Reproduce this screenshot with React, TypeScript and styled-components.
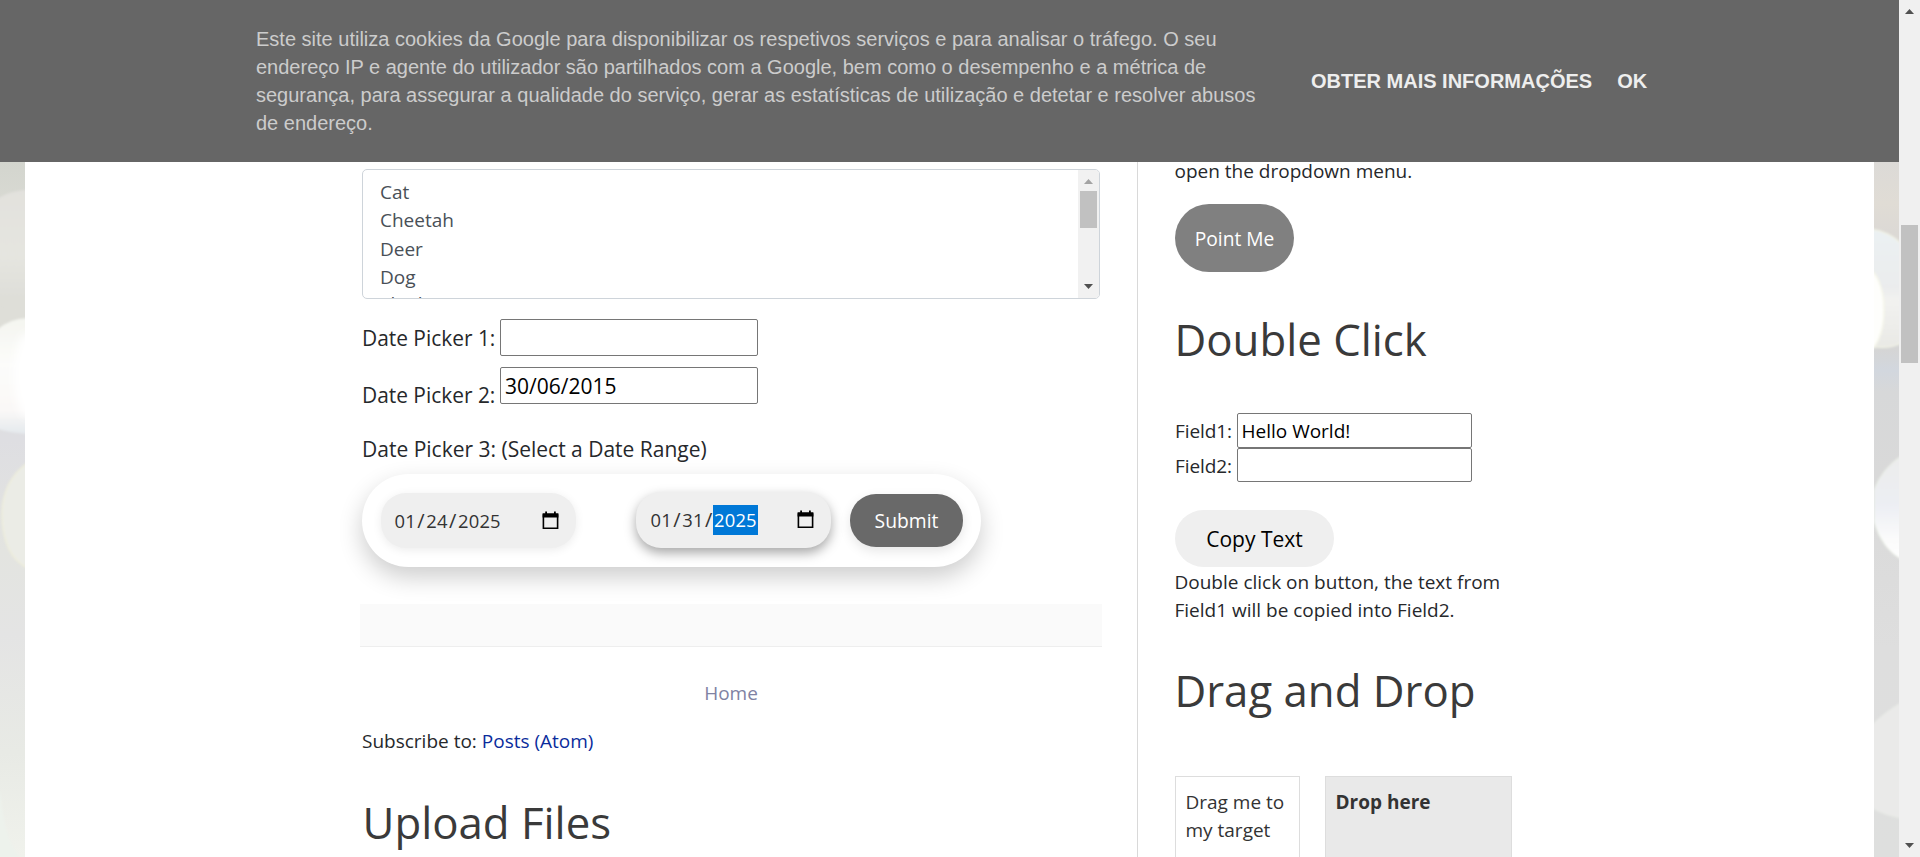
import React from "react";
import styled, { createGlobalStyle } from "styled-components";

const GlobalStyle = createGlobalStyle`
  *, *::before, *::after { box-sizing: border-box; }
  body {
    margin: 0;
    overflow: hidden;
    background: #fff;
    color: #26282b;
    font-family: "Open Sans", "Noto Sans", sans-serif;
    font-size: 19px;
    line-height: 28px;
  }
`;

const Page = styled.div`
  position: relative;
  display: flex;
  width: 1920px;
  height: 857px;
  overflow: hidden;
`;

/* cookie notice */

const CookieBar = styled.aside`
  position: absolute;
  top: 0;
  left: 0;
  z-index: 2;
  display: flex;
  align-items: center;
  width: 1899px;
  height: 162px;
  padding-left: 256px;
  background: #666;
  font-family: "Liberation Sans", Arial, sans-serif;
  font-size: 20px;
  line-height: 28px;
`;

const CookieText = styled.p`
  width: 1010px;
  margin: 0 45px 0 0;
  color: #ccc;
`;

const CookieActions = styled.div`
  display: flex;
  gap: 25px;
`;

const CookieAction = styled.a`
  color: #eee;
  font-weight: bold;
  white-space: nowrap;
`;

/* page frame */

const Strip = styled.svg`
  flex: none;
  width: 25px;
  height: 857px;
`;

const Content = styled.div`
  flex: none;
  display: flex;
  width: 1849px;
  height: 857px;
  padding-left: 337px;
  background: #fff;
`;

const MainColumn = styled.main`
  flex: none;
  width: 775px;
  height: 857px;
  padding: 169px 37px 0 0;
`;

const SideColumn = styled.aside`
  flex: none;
  width: 375px;
  height: 857px;
  padding: 157px 0 0 37px;
  border-left: 1px solid #d9d9d9;
`;

const Track = styled.div`
  flex: none;
  display: flex;
  flex-direction: column;
  align-items: center;
  width: 21px;
  height: 857px;
  background: #f0f0f0;
`;

const TrackThumb = styled.div`
  width: 17px;
  height: 138px;
  margin-top: 211px;
  background: #c1c1c1;
`;

const TrackArrow = styled.svg<{ $top: number }>`
  flex: none;
  width: 9px;
  height: 5px;
  margin-top: ${(p) => p.$top}px;
`;

/* shared */

const Heading = styled.h2<{ $top: number; $bottom?: number; $indent?: number }>`
  margin: ${(p) => p.$top}px 0 ${(p) => p.$bottom ?? 0}px ${(p) => p.$indent ?? -0.5}px;
  color: #3a3a3a;
  font-size: 43.75px;
  font-weight: 400;
  line-height: 54px;
  white-space: nowrap;
`;

const TextInput = styled.input<{ $w: number; $h: number; $size: number }>`
  width: ${(p) => p.$w}px;
  height: ${(p) => p.$h}px;
  padding: 0 ${(p) => (p.$size < 20 ? 3.5 : 4)}px;
  border: 1px solid #767676;
  border-radius: 2px;
  background: #fff;
  color: #000;
  font: ${(p) => p.$size}px "Open Sans", "Noto Sans", sans-serif;
  outline: none;
`;

/* animal list */

const ListBox = styled.div`
  display: flex;
  height: 130px;
  border: 1px solid #ced4da;
  border-radius: 5px;
  overflow: hidden;
`;

const Options = styled.ul`
  flex: 1;
  margin: 0;
  padding: 8px 0 0 17px;
  list-style: none;
  color: #495057;
  line-height: 28.3px;

  li:last-child {
    margin-top: -1px;
  }
`;

const ListTrack = styled.div`
  display: flex;
  flex-direction: column;
  align-items: center;
  width: 21px;
  background: #f1f1f1;
`;

const ListThumb = styled.div`
  width: 17px;
  height: 37px;
  margin-top: 7px;
  background: #c1c1c1;
`;

/* date pickers */

const DateRow = styled.div<{ $top: number }>`
  display: flex;
  align-items: flex-start;
  height: 37px;
  margin-top: ${(p) => p.$top}px;
`;

const DateLabel = styled.label<{ $top: number }>`
  width: 138px;
  margin-top: ${(p) => p.$top}px;
  font-size: 20.9px;
  line-height: 30px;
  white-space: nowrap;
`;

const RangeLabel = styled.p`
  margin: 30px 0 0;
  font-size: 21px;
  line-height: 30px;
`;

const RangePill = styled.div`
  display: flex;
  align-items: center;
  width: 619px;
  height: 93px;
  margin-top: 10px;
  padding: 0 18px 0 19px;
  border-radius: 47px;
  background: #fff;
  box-shadow: 0 10px 25px rgba(0, 0, 0, 0.2);
`;

const DateField = styled.div<{ $focused?: boolean }>`
  display: flex;
  align-items: center;
  width: 195px;
  height: ${(p) => (p.$focused ? 56 : 55)}px;
  margin-bottom: ${(p) => (p.$focused ? 1 : 0)}px;
  margin-left: ${(p) => (p.$focused ? 60 : 0)}px;
  padding: 0 17px 0 ${(p) => (p.$focused ? 13.5 : 12.5)}px;
  border-radius: 25px;
  background: #efefef;
  box-shadow: ${(p) => (p.$focused ? "0 5px 12px rgba(0, 0, 0, 0.35)" : "0 2px 10px rgba(0, 0, 0, 0.08)")};
  color: #333;
  font-size: 18.4px;
  line-height: 30px;
  letter-spacing: 0.2px;
`;

const Segment = styled.span<{ $selected?: boolean }>`
  padding: 0 1px;
  background: ${(p) => (p.$selected ? "#0078d7" : "transparent")};
  color: ${(p) => (p.$selected ? "#fff" : "inherit")};
`;

const Slash = styled.span`
  width: 8.3px;
  font-size: 20px;
  text-align: center;
`;

const CalendarIcon = styled.svg`
  width: 17px;
  height: 19px;
  margin: 0 0 1px auto;
`;

const SubmitButton = styled.button`
  width: 113px;
  height: 53px;
  margin-left: 19px;
  padding: 0;
  border: 0;
  border-radius: 26px;
  background: #696969;
  box-shadow: 0 4px 12px rgba(0, 0, 0, 0.1);
  color: #fff;
  font: 19.3px "Open Sans", "Noto Sans", sans-serif;
`;

const FooterBand = styled.div`
  height: 43px;
  margin: 37px -2px 0;
  border-bottom: 1px solid #eee;
  background: #fafafa;
`;

const HomeLink = styled.a`
  display: block;
  margin-top: 32px;
  color: #7f82a3;
  text-align: center;
`;

const Subscribe = styled.div`
  margin-top: 20px;
`;

const FeedLink = styled.a`
  color: #0a2c9c;
`;

/* sidebar */

const PointButton = styled.button`
  display: block;
  width: 119px;
  height: 68px;
  margin-top: 19px;
  padding: 0;
  border: 0;
  border-radius: 34px;
  background: #808080;
  color: #fff;
  font: 19.2px "Open Sans", "Noto Sans", sans-serif;
`;

const Fields = styled.div`
  margin-top: 47px;
`;

const FieldRow = styled.div`
  display: flex;
  align-items: flex-start;
`;

const FieldLabel = styled.label`
  width: 62px;
  margin-top: 4px;
  letter-spacing: -0.1px;
`;

const CopyButton = styled.button`
  display: block;
  width: 159px;
  height: 57px;
  margin-top: 28px;
  padding: 0;
  border: 0;
  border-radius: 29px;
  background: #efefef;
  color: #000;
  font: 21px "Open Sans", "Noto Sans", sans-serif;
`;

const SideText = styled.p<{ $top?: number }>`
  margin: ${(p) => p.$top ?? 0}px 0 0 -0.5px;
`;

const DragArea = styled.div`
  display: flex;
  gap: 25px;
`;

const DragBox = styled.div<{ $target?: boolean }>`
  flex: none;
  width: ${(p) => (p.$target ? 187 : 125)}px;
  height: 150px;
  padding: 11px 9.5px;
  border: 1px solid #ddd;
  background: ${(p) => (p.$target ? "#e9e9e9" : "#fff")};
  color: #333;
  font-weight: ${(p) => (p.$target ? 700 : 400)};
`;

const Calendar = () => (
  <CalendarIcon viewBox="0 0 17 19">
    <path d="M1.4 4v13.2h14.2V4z" fill="none" stroke="#000" strokeWidth="1.6" />
    <path d="M.6 2.2h15.8v4.2H.6zM3.2.6h1.8v2H3.2zM12 .6h1.8v2H12z" fill="#000" />
  </CalendarIcon>
);

const Arrow = ({ up, top, color }: { up?: boolean; top: number; color: string }) => (
  <TrackArrow $top={top} viewBox="0 0 9 5">
    <path d={up ? "M0 5L4.5 0L9 5z" : "M0 0L4.5 5L9 0z"} fill={color} />
  </TrackArrow>
);

const LeftBokeh = () => (
  <Strip viewBox="0 0 25 857">
    <defs>
      <linearGradient id="lb" x1="0" y1="162" x2="0" y2="857" gradientUnits="userSpaceOnUse">
        <stop offset="0" stopColor="#d3d5ce" />
        <stop offset=".12" stopColor="#deded8" />
        <stop offset=".23" stopColor="#deded8" />
        <stop offset=".4" stopColor="#dedee2" />
        <stop offset=".56" stopColor="#e3e4e0" />
        <stop offset=".68" stopColor="#e4e4e4" />
        <stop offset=".85" stopColor="#e8eae5" />
        <stop offset="1" stopColor="#f0f2ec" />
      </linearGradient>
      <linearGradient id="lc" x1="0" y1="188" x2="0" y2="300" gradientUnits="userSpaceOnUse">
        <stop offset="0" stopColor="#e2e1dd" />
        <stop offset=".6" stopColor="#e5e5e0" />
        <stop offset="1" stopColor="#deded8" />
      </linearGradient>
      <linearGradient id="ld" x1="0" y1="318" x2="0" y2="434" gradientUnits="userSpaceOnUse">
        <stop offset="0" stopColor="#f4f5f0" />
        <stop offset=".4" stopColor="#fcfcfa" />
        <stop offset=".8" stopColor="#faf8f7" />
        <stop offset="1" stopColor="#e4e9ed" />
      </linearGradient>
      <filter id="ls" x="-50%" y="-20%" width="200%" height="140%">
        <feGaussianBlur stdDeviation="1" />
      </filter>
      <filter id="lw" x="-50%" y="-20%" width="200%" height="140%">
        <feGaussianBlur stdDeviation="4" />
      </filter>
    </defs>
    <rect width="25" height="857" fill="url(#lb)" />
    <ellipse cx="28" cy="250" rx="58" ry="60" fill="url(#lc)" filter="url(#ls)" />
    <path d="M-5 332Q8 318 30 318V434Q8 433-5 428z" fill="url(#ld)" filter="url(#ls)" />
    <ellipse cx="28" cy="375" rx="14" ry="42" fill="#fff" filter="url(#lw)" />
    <path d="M30 461Q2 480 2 515Q3 558 30 569z" fill="#ebece6" stroke="#eeeedb" strokeWidth="1.5" filter="url(#ls)" />
    <path d="M0 790Q4 840 20 857H-5z" fill="#edf2ec" filter="url(#ls)" />
  </Strip>
);

const RightBokeh = () => (
  <Strip viewBox="0 0 25 857">
    <defs>
      <linearGradient id="rb" x1="0" y1="162" x2="0" y2="857" gradientUnits="userSpaceOnUse">
        <stop offset="0" stopColor="#dcdad7" />
        <stop offset=".06" stopColor="#e0dcd5" />
        <stop offset=".1" stopColor="#dcd9d5" />
        <stop offset=".27" stopColor="#d5d5d5" />
        <stop offset=".3" stopColor="#d2d7de" />
        <stop offset=".33" stopColor="#d7d8d9" />
        <stop offset=".45" stopColor="#d9d9d9" />
        <stop offset=".7" stopColor="#dedede" />
        <stop offset="1" stopColor="#dedfde" />
      </linearGradient>
      <linearGradient id="rc" x1="0" y1="229" x2="0" y2="347" gradientUnits="userSpaceOnUse">
        <stop offset="0" stopColor="#ebf1f3" />
        <stop offset=".5" stopColor="#ebeced" />
        <stop offset=".6" stopColor="#f2f2f0" />
        <stop offset="1" stopColor="#e9e9e5" />
      </linearGradient>
      <linearGradient id="rd" x1="0" y1="458" x2="0" y2="560" gradientUnits="userSpaceOnUse">
        <stop offset="0" stopColor="#ececec" />
        <stop offset=".45" stopColor="#eceef3" />
        <stop offset=".8" stopColor="#fbfbfb" />
        <stop offset="1" stopColor="#fff" />
      </linearGradient>
      <filter id="rs" x="-50%" y="-20%" width="200%" height="140%">
        <feGaussianBlur stdDeviation=".8" />
      </filter>
    </defs>
    <rect width="25" height="857" fill="url(#rb)" />
    <path d="M-5 229Q14 230 30 246V341Q18 350-5 346z" fill="url(#rc)" stroke="#f2f3e6" strokeWidth="1.5" filter="url(#rs)" />
    <ellipse cx="-8" cy="310" rx="18" ry="41" fill="#fefefc" stroke="#f6f7ea" strokeWidth="1.5" filter="url(#rs)" />
    <path d="M30 454Q8 468 0 490V522Q8 550 30 561z" fill="url(#rd)" stroke="#ebf1e6" strokeWidth="1" filter="url(#rs)" />
    <path d="M30 701Q10 712-5 728V807Q12 816 30 819z" fill="#eaeae9" stroke="#e7eae5" strokeWidth="1" filter="url(#rs)" />
  </Strip>
);

const animals = ["Cat", "Cheetah", "Deer", "Dog", "Elephant"];

export default function App() {
  return (
    <>
      <GlobalStyle />
      <Page>
        <CookieBar>
          <CookieText>
            Este site utiliza cookies da Google para disponibilizar os respetivos serviços e para analisar o tráfego. O seu
            endereço IP e agente do utilizador são partilhados com a Google, bem como o desempenho e a métrica de
            segurança, para assegurar a qualidade do serviço, gerar as estatísticas de utilização e detetar e resolver
            abusos de endereço.
          </CookieText>
          <CookieActions>
            <CookieAction>OBTER MAIS INFORMAÇÕES</CookieAction>
            <CookieAction>OK</CookieAction>
          </CookieActions>
        </CookieBar>

        <LeftBokeh />
        <Content>
          <MainColumn>
            <ListBox>
              <Options>
                {animals.map((name) => (
                  <li key={name}>{name}</li>
                ))}
              </Options>
              <ListTrack>
                <Arrow up top={9} color="#a3a3a3" />
                <ListThumb />
                <Arrow top={56} color="#505050" />
              </ListTrack>
            </ListBox>

            <DateRow $top={20}>
              <DateLabel $top={4}>Date Picker 1:</DateLabel>
              <TextInput $w={258} $h={37} $size={21} defaultValue="" />
            </DateRow>
            <DateRow $top={11}>
              <DateLabel $top={13}>Date Picker 2:</DateLabel>
              <TextInput $w={258} $h={37} $size={21} defaultValue="30/06/2015" />
            </DateRow>

            <RangeLabel>Date Picker 3: (Select a Date Range)</RangeLabel>
            <RangePill>
              <DateField>
                <Segment>01</Segment>
                <Slash>/</Slash>
                <Segment>24</Segment>
                <Slash>/</Slash>
                <Segment>2025</Segment>
                <Calendar />
              </DateField>
              <DateField $focused>
                <Segment>01</Segment>
                <Slash>/</Slash>
                <Segment>31</Segment>
                <Slash>/</Slash>
                <Segment $selected>2025</Segment>
                <Calendar />
              </DateField>
              <SubmitButton>Submit</SubmitButton>
            </RangePill>

            <FooterBand />
            <HomeLink>Home</HomeLink>
            <Subscribe>
              Subscribe to: <FeedLink>Posts (Atom)</FeedLink>
            </Subscribe>
            <Heading $top={40} $indent={0.5}>
              Upload Files
            </Heading>
          </MainColumn>

          <SideColumn>
            <SideText>open the dropdown menu.</SideText>
            <PointButton>Point Me</PointButton>
            <Heading $top={40}>Double Click</Heading>
            <Fields>
              <FieldRow>
                <FieldLabel>Field1:</FieldLabel>
                <TextInput $w={235} $h={35} $size={19} defaultValue="Hello World!" />
              </FieldRow>
              <FieldRow>
                <FieldLabel>Field2:</FieldLabel>
                <TextInput $w={235} $h={34} $size={19} defaultValue="" />
              </FieldRow>
            </Fields>
            <CopyButton>Copy Text</CopyButton>
            <SideText $top={1}>Double click on button, the text from Field1 will be copied into Field2.</SideText>
            <Heading $top={39} $bottom={59}>
              Drag and Drop
            </Heading>
            <DragArea>
              <DragBox>Drag me to my target</DragBox>
              <DragBox $target>Drop here</DragBox>
            </DragArea>
          </SideColumn>
        </Content>
        <RightBokeh />
        <Track>
          <Arrow up top={9} color="#505050" />
          <TrackThumb />
          <Arrow top={480} color="#505050" />
        </Track>
      </Page>
    </>
  );
}
